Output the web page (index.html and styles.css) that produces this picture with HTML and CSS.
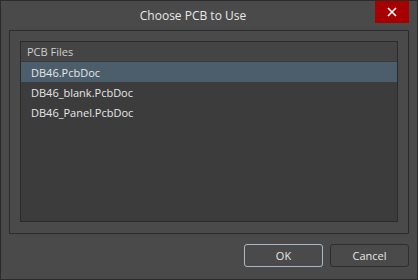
FILE: index.html
```html
<!DOCTYPE html>
<html lang="en">
<head>
    <meta charset="UTF-8">
    <title>Choose PCB to Use</title>
    <link rel="stylesheet" href="styles.css">
</head>
<body>
    <div class="dialog">
        <div class="titlebar">
            <div class="title">Choose PCB to Use</div>
            <button class="close-btn" aria-label="Close">
                <svg width="10" height="10" viewBox="0 0 10 10"><path d="M1 1L9 9M9 1L1 9" stroke="#fff" stroke-width="1.6"/></svg>
            </button>
        </div>

        <div class="group">
            <div class="listview">
                <div class="list-header">PCB Files</div>
                <div class="list-row selected">DB46.PcbDoc</div>
                <div class="list-row">DB46_blank.PcbDoc</div>
                <div class="list-row">DB46_Panel.PcbDoc</div>
            </div>
        </div>

        <div class="footer">
            <button class="btn btn-default">OK</button>
            <button class="btn">Cancel</button>
        </div>
    </div>
</body>
</html>
```

FILE: styles.css
```css
:root {
    --bg: #4a4a4a; --edge: #2b2b2b; --list-bg: #3c3c3c;
    --text: #e6e6e6; --select: #4c5e6c;
}
* { box-sizing: border-box; margin: 0; padding: 0; }
body { font-family: 'Open Sans', 'Noto Sans', sans-serif; background: var(--bg); }
.dialog {
    width: 418px; height: 280px; background: var(--bg); border: 1px solid var(--edge);
    display: flex; flex-direction: column;
}
.titlebar { display: flex; height: 29px; align-items: flex-start; }
.title {
    flex: 1; text-align: center; padding-left: 10px; padding-top: 7px;
    font-size: 12px; color: #e8e8e8; line-height: 16px;
}
.close-btn {
    width: 34px; height: 22px; margin-right: 8px; background: #a60000; border: none;
    display: flex; align-items: center; justify-content: center;
}
.group {
    margin: 0 8px; height: 204px; border: 1px solid var(--edge);
    padding: 10px 10px 11px 10px;
}
.listview { height: 181px; border: 1px solid var(--edge); background: var(--list-bg); }
.list-header {
    height: 20px; line-height: 20px; padding-left: 6px; font-size: 11px; color: #cfcfcf;
    background: #444; border-bottom: 1px solid #3a3a3a;
}
.list-row { height: 20px; line-height: 21px; padding-left: 10px; font-size: 11px; color: var(--text); }
.list-row.selected { background: var(--select); }
.footer { display: flex; justify-content: flex-end; gap: 7px; margin: 10px 8px 0 0; }
.btn {
    width: 79px; height: 23px; font-family: 'Open Sans', 'Noto Sans', sans-serif; font-size: 11px;
    color: var(--text); background: #4a4a4a; border: 1px solid #2e2e2e; border-radius: 3px;
}
.btn-default { border-color: #a9bacb; }
```
